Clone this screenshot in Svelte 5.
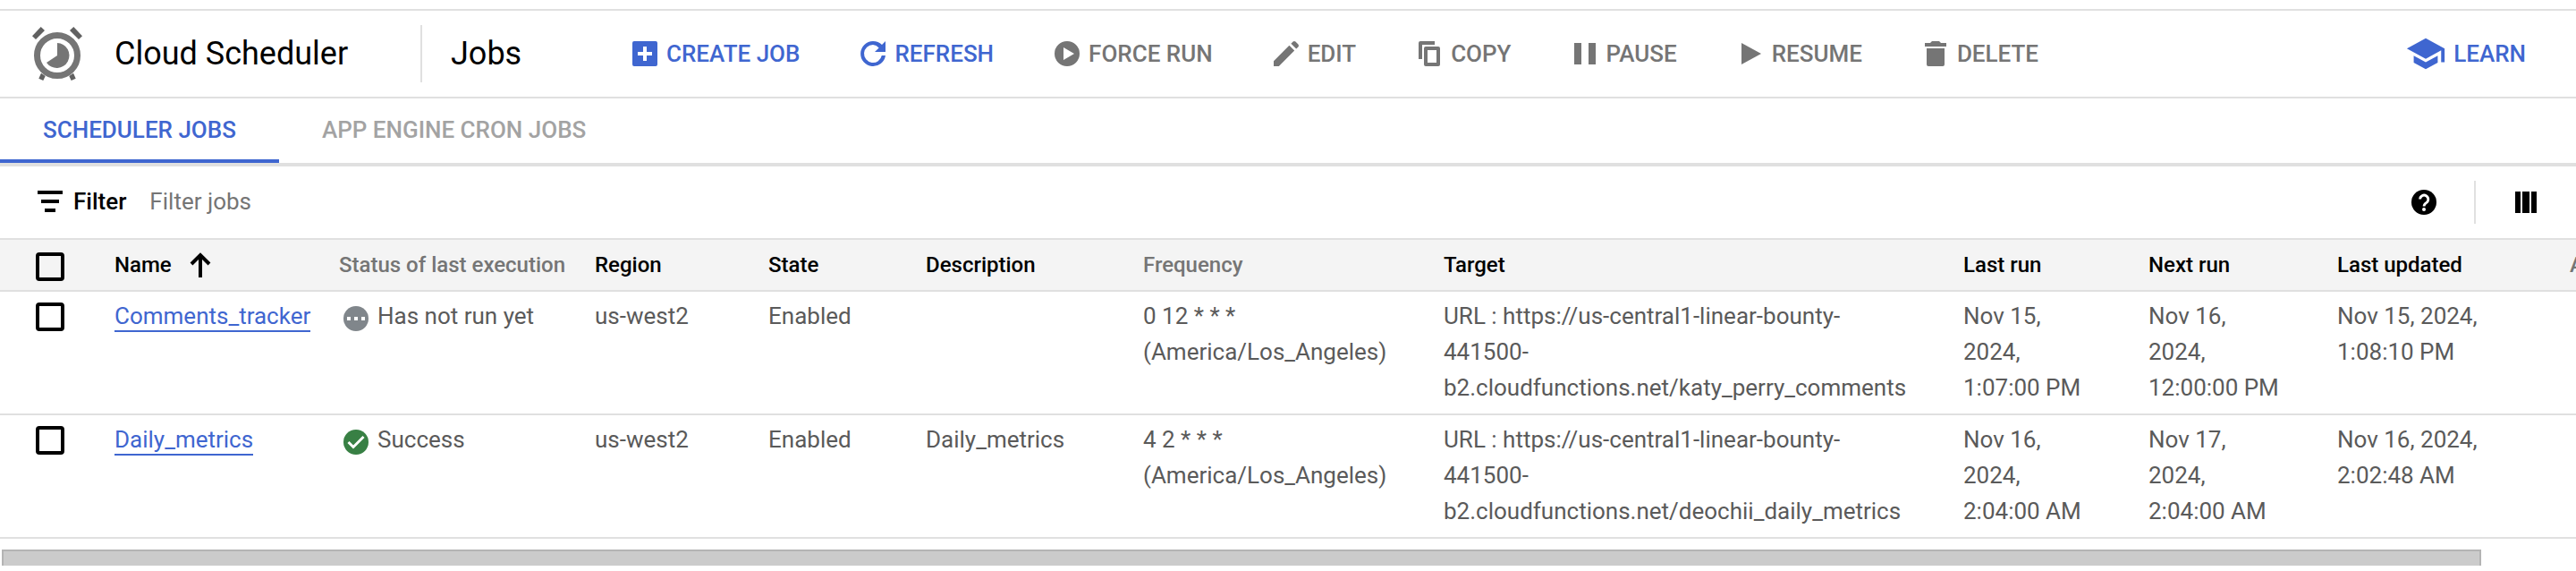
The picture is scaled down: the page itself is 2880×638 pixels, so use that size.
<script>
  const actions = [
    { label: 'CREATE JOB', primary: true, d: 'M3 2h12a1 1 0 0 1 1 1v12a1 1 0 0 1-1 1H3a1 1 0 0 1-1-1V3a1 1 0 0 1 1-1zm5 3v3H5v2h3v3h2v-3h3V8h-3V5z' },
    { label: 'REFRESH', primary: true, d: 'M16 2v6h-6l2.3-2.3A4.9 4.9 0 0 0 9 4a5 5 0 1 0 4.9 6H16A7 7 0 1 1 9 2c2 0 3.7.8 5 2z' },
    { label: 'FORCE RUN', d: 'M9 2a7 7 0 1 1 0 14A7 7 0 0 1 9 2zM7 5.5v7L13 9z' },
    { label: 'EDIT', d: 'M2 13.1 10.7 4.4l2.9 2.9L4.9 16H2zM11.7 3.4l1.1-1.1a1 1 0 0 1 1.4 0l1.5 1.5a1 1 0 0 1 0 1.4l-1.1 1.1z' },
    { label: 'COPY', d: 'M4 2h8v2H5v8H3V3a1 1 0 0 1 1-1zM7 5h7a1 1 0 0 1 1 1v9a1 1 0 0 1-1 1H7a1 1 0 0 1-1-1V6a1 1 0 0 1 1-1zm1 2v7h5V7z' },
    { label: 'PAUSE', d: 'M3 3h4v12H3zM11 3h4v12h-4z' },
    { label: 'RESUME', d: 'M4 3v12l11-6z' },
    { label: 'DELETE', d: 'M3 3h3l1-1h4l1 1h3v2H3zM4 6h10v9a1 1 0 0 1-1 1H5a1 1 0 0 1-1-1z' }
  ];

  const columns = [
    { label: 'Name', sorted: true },
    { label: 'Status of last execution', muted: true },
    { label: 'Region' },
    { label: 'State' },
    { label: 'Description' },
    { label: 'Frequency', muted: true },
    { label: 'Target' },
    { label: 'Last run' },
    { label: 'Next run' },
    { label: 'Last updated' },
    { label: 'Actions', muted: true }
  ];

  const widths = [112, 251, 286, 194, 176, 243, 336, 581, 207, 211, 260, 160];
  const total = widths.reduce((sum, width) => sum + width, 0);

  const jobs = [
    {
      name: 'Comments_tracker', ok: false, status: 'Has not run yet', region: 'us-west2', state: 'Enabled', description: '',
      frequency: ['0 12 * * *', '(America/Los_Angeles)'],
      target: ['URL : https://us-central1-linear-bounty-', '441500-', 'b2.cloudfunctions.net/katy_perry_comments'],
      last: ['Nov 15,', '2024,', '1:07:00 PM'],
      next: ['Nov 16,', '2024,', '12:00:00 PM'],
      updated: ['Nov 15, 2024,', '1:08:10 PM']
    },
    {
      name: 'Daily_metrics', ok: true, status: 'Success', region: 'us-west2', state: 'Enabled', description: 'Daily_metrics',
      frequency: ['4 2 * * *', '(America/Los_Angeles)'],
      target: ['URL : https://us-central1-linear-bounty-', '441500-', 'b2.cloudfunctions.net/deochii_daily_metrics'],
      last: ['Nov 16,', '2024,', '2:04:00 AM'],
      next: ['Nov 17,', '2024,', '2:04:00 AM'],
      updated: ['Nov 16, 2024,', '2:02:48 AM']
    }
  ];
</script>

{#snippet lines(list)}
  {#each list as line}<span class="line">{line}</span>{/each}
{/snippet}

<div class="page">
  <header>
    <div class="product">
      <svg class="logo" viewBox="0 0 56 64" aria-hidden="true">
        <circle cx="28" cy="34" r="22.5" fill="none" stroke="#757575" stroke-width="7" />
        <path d="M0 12.300 9.700 2l4.300 4L4 16zM56 12.300 46.300 2 42 6l10 10zM10 53.700l4.700 3.300-2.400 5-5-2.300zM46 53.700 41.300 57l2.400 5 5-2.300z" fill="#616161" />
        <path d="M28 20a14 14 0 1 1-12 22l12-8z" fill="#757575" />
      </svg>
      <span>Cloud Scheduler</span>
    </div>
    <h1>Jobs</h1>
    <div class="actions">
      {#each actions as action}
        <button class="action" class:primary={action.primary}>
          <svg viewBox="0 0 18 18" aria-hidden="true"><path fill-rule="evenodd" d={action.d} /></svg>
          {action.label}
        </button>
      {/each}
    </div>
    <button class="action primary learn">
      <svg viewBox="0 0 24 24" aria-hidden="true"><path d="M5 13.2v4l7 3.8 7-3.8v-4L12 17zM12 3 1 9l11 6 9-4.9V17h2V9z" /></svg>
      LEARN
    </button>
  </header>

  <nav>
    <a class="tab current" href="#scheduler">SCHEDULER JOBS</a>
    <a class="tab" href="#cron">APP ENGINE CRON JOBS</a>
  </nav>

  <div class="filter">
    <label for="filter-jobs">
      <svg viewBox="0 0 28 24" aria-hidden="true"><path d="M0 0h28v4H0zM4 10h20v4H4zM8 20h12v4H8z" /></svg>
      Filter
    </label>
    <input id="filter-jobs" type="text" placeholder="Filter jobs" />
    <button class="tool" aria-label="Help">
      <svg viewBox="0 0 28 28" aria-hidden="true">
        <circle cx="14" cy="14" r="14" />
        <path d="M9.6 10.6a4.6 4.6 0 1 1 7 4c-1.700 1-2.500 1.700-2.500 3.800" fill="none" stroke="#fff" stroke-width="2.800" />
        <circle cx="14" cy="22" r="2" fill="#fff" />
      </svg>
    </button>
    <button class="tool split" aria-label="Column display options">
      <svg viewBox="0 0 28 28" aria-hidden="true"><path d="M2 2h6v24H2zM10 2h8v24h-8zM20 2h6v24h-6z" /></svg>
    </button>
  </div>

  <div class="viewport">
    <table style="width: {total}px">
      <colgroup>
        {#each widths as width}<col style="width: {width}px" />{/each}
      </colgroup>
      <thead>
        <tr>
          <th class="pick"><input type="checkbox" aria-label="Select all jobs" /></th>
          {#each columns as column}
            <th class:muted={column.muted}>
              <span class="head">
                {column.label}
                {#if column.sorted}
                  <svg viewBox="0 0 24 28" aria-hidden="true"><path d="M12 2v26M2 13 12 3l10 10" fill="none" stroke="#000" stroke-width="4" /></svg>
                {/if}
              </span>
            </th>
          {/each}
        </tr>
      </thead>
      <tbody>
        {#each jobs as job}
          <tr>
            <td class="pick"><input type="checkbox" aria-label="Select {job.name}" /></td>
            <td><a class="job" href="#{job.name}">{job.name}</a></td>
            <td>
              <span class="status">
                <svg viewBox="0 0 28 28" aria-hidden="true">
                  {#if job.ok}
                    <circle cx="14" cy="14" r="14" fill="#388044" />
                    <path d="M5.500 14 11 19.500 22.500 8" fill="none" stroke="#fff" stroke-width="3" />
                  {:else}
                    <circle cx="14" cy="14" r="14" fill="#80868b" />
                    <path d="M4 12h4v4H4zM12 12h4v4h-4zM20 12h4v4h-4z" fill="#fff" />
                  {/if}
                </svg>
                {job.status}
              </span>
            </td>
            <td>{job.region}</td>
            <td>{job.state}</td>
            <td>{job.description}</td>
            <td>{@render lines(job.frequency)}</td>
            <td>{@render lines(job.target)}</td>
            <td>{@render lines(job.last)}</td>
            <td>{@render lines(job.next)}</td>
            <td>{@render lines(job.updated)}</td>
            <td></td>
          </tr>
        {/each}
      </tbody>
    </table>
  </div>
  <div class="track"><div class="thumb"></div></div>
</div>

<style>
  :global(body) { background: #fff; overflow: hidden; }
  .page {
    padding-top: 10px;
    font-family: Roboto, Arial, sans-serif;
    font-size: 26px;
    line-height: 40px;
    color: #5a5a5a;
  }
  button, input { font: inherit; margin: 0; }
  button { border: 0; padding: 0; background: none; cursor: pointer; }
  svg { display: block; flex: none; }

  header {
    display: flex;
    align-items: center;
    height: 96px;
    border-top: 2px solid #e0e0e0;
    border-bottom: 2px solid #e0e0e0;
    color: #000;
  }
  .product {
    display: flex;
    align-items: center;
    gap: 36px;
    width: 472px;
    height: 64px;
    padding-left: 36px;
    box-sizing: border-box;
    border-right: 2px solid #e0e0e0;
    font-size: 36px;
  }
  .logo { width: 56px; height: 64px; }
  h1 { margin: 0; width: 199px; padding-left: 32px; font-size: 36px; font-weight: 400; }
  .actions { display: flex; gap: 64px; }
  .action {
    display: flex;
    align-items: center;
    gap: 6px;
    font-weight: 500;
    color: #757575;
  }
  .action svg { width: 36px; height: 36px; fill: currentColor; }
  .primary { color: #3f66d0; }
  .learn { margin-left: auto; margin-right: 56px; gap: 8px; }
  .learn svg { width: 46px; height: 46px; }

  nav { display: flex; height: 72px; border-bottom: 4px solid #e0e0e0; }
  .tab {
    padding: 15px 48px 13px;
    border-bottom: 4px solid transparent;
    box-sizing: border-box;
    line-height: 40px;
    font-weight: 500;
    color: #a3a3a3;
    text-decoration: none;
  }
  .current { color: #3f66d0; border-bottom-color: #3f66d0; }

  .filter { display: flex; align-items: center; height: 80px; padding-left: 42px; }
  .filter label { display: flex; align-items: center; gap: 12px; padding-bottom: 2px; font-weight: 500; color: #000; }
  .filter label svg { width: 28px; height: 24px; }
  .filter input { flex: 1; margin-left: 26px; padding: 0 0 2px; border: 0; outline: 0; background: none; }
  .filter input::placeholder { color: #757575; opacity: 1; }
  .tool { display: flex; align-items: center; height: 48px; padding-right: 42px; }
  .tool svg { width: 28px; height: 28px; }
  .split { padding-left: 42px; border-left: 2px solid #e0e0e0; }

  .viewport { overflow: hidden; }
  table { table-layout: fixed; border-collapse: separate; border-spacing: 0; }
  th, td { padding: 0 16px; text-align: left; vertical-align: top; border-bottom: 2px solid #e0e0e0; white-space: nowrap; }
  th {
    height: 56px;
    border-top: 2px solid #e0e0e0;
    background: #f4f4f4;
    vertical-align: middle;
    font-size: 24px;
    font-weight: 500;
    color: #000;
  }
  .muted { color: #757575; }
  .head { display: flex; align-items: center; gap: 20px; }
  .head svg { width: 24px; height: 28px; }
  td { height: 138px; box-sizing: border-box; padding-top: 7px; }
  .pick { padding-left: 40px; }
  th.pick { height: 52px; padding-top: 4px; }
  td.pick { padding-top: 12px; }
  .pick input {
    display: block;
    appearance: none;
    width: 32px;
    height: 32px;
    border: 4px solid #000;
    border-radius: 4px;
    box-sizing: border-box;
  }
  .line { display: block; }
  .job { display: inline-block; line-height: 32px; border-bottom: 2px solid #3f66d0; color: #3f66d0; text-decoration: none; }
  .status { display: flex; align-items: center; gap: 10px; padding-left: 5px; }
  .status svg { width: 28px; height: 28px; margin-top: 5px; }

  .track { padding: 12px 106px 6px 2px; }
  .thumb { height: 18px; box-sizing: border-box; background: #cbcbcb; border: 2px solid #b4b4b4; border-bottom: 0; }
</style>
